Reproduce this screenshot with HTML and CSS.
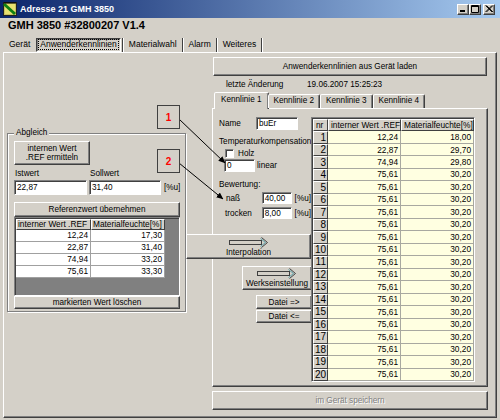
FILE: index.html
```html
<!DOCTYPE html>
<html lang="de">
<head>
<meta charset="utf-8">
<title>Adresse 21 GMH 3850</title>
<link rel="stylesheet" href="styles.css">
</head>
<body>
<div class="window">
  <div class="titlebar">
    <svg class="appicon" viewBox="0 0 14 14" width="14" height="14">
      <rect x="0.5" y="0.5" width="13" height="13" fill="#c8c060" stroke="#202020"/>
      <rect x="2" y="2" width="10" height="10" fill="#e8e070"/>
      <path d="M1 2 L12 12" stroke="#108010" stroke-width="3"/>
      <path d="M1 1 H13" stroke="#000" stroke-width="1"/>
    </svg>
    <span class="title">Adresse 21 GMH 3850</span>
    <div class="caption-buttons">
      <span class="capbtn"><svg width="8" height="8" viewBox="0 0 8 8"><rect x="1" y="5" width="5" height="2" fill="#000"/></svg></span>
      <span class="capbtn"><svg width="8" height="8" viewBox="0 0 8 8"><path d="M0.5 0.5 H7.5 V7.5 H0.5 Z M0.5 1.5 H7.5" fill="none" stroke="#000"/></svg></span>
      <span class="capbtn close"><svg width="8" height="8" viewBox="0 0 8 8"><path d="M0.5 0.5 L7 7 M1.5 0.5 L8 7 M7 0.5 L0.5 7 M8 0.5 L1.5 7" stroke="#000" stroke-width="0.9"/></svg></span>
    </div>
  </div>

  <div class="devtitle">GMH 3850 #32800207 V1.4</div>

  <div class="maintabs">
    <span class="mtab first">Gerät</span>
    <span class="mtab active"><span class="focus">Anwenderkennlinien</span></span>
    <span class="sep"></span>
    <span class="mtab">Materialwahl</span>
    <span class="sep"></span>
    <span class="mtab">Alarm</span>
    <span class="sep"></span>
    <span class="mtab">Weiteres</span>
    <span class="sep"></span>
  </div>

  <div class="page">
    <div class="leftcol">
      <div class="group">
        <span class="legend">Abgleich</span>
        <div class="btn btn-ermitteln">internen Wert<br>.REF ermitteln</div>
        <div class="labels-row">
          <span class="lbl-ist">Istwert</span>
          <span>Sollwert</span>
        </div>
        <div class="inputs-row">
          <span class="edit edit-ist">22,87</span>
          <span class="edit edit-soll">31,40</span>
          <span class="unit">[%u]</span>
        </div>
        <div class="btn btn-wide btn-ref">Referenzwert übernehmen</div>
        <div class="lgrid-frame">
          <div class="lgrid">
            <div class="hc">interner Wert .REF</div><div class="hc">Materialfeuchte[%]</div>
            <div class="wc">12,24</div><div class="wc">17,30</div>
            <div class="wc">22,87</div><div class="wc">31,40</div>
            <div class="wc">74,94</div><div class="wc">33,20</div>
            <div class="wc">75,61</div><div class="wc">33,30</div>
          </div>
        </div>
        <div class="btn btn-wide btn-del">markierten Wert löschen</div>
      </div>
    </div>

    <div class="rightcol">
      <div class="btn btn-load">Anwenderkennlinien aus Gerät laden</div>
      <div class="info-row">
        <span class="info-label">letzte Änderung</span>
        <span>19.06.2007 15:25:23</span>
      </div>
      <div class="ktabs">
        <span class="ktab active">Kennlinie 1</span>
        <span class="ktab">Kennlinie 2</span>
        <span class="ktab">Kennlinie 3</span>
        <span class="ktab">Kennlinie 4</span>
      </div>
      <div class="kpage">
        <div class="form">
          <div class="row row-name">
            <span class="lbl-name">Name</span>
            <span class="edit edit-name">buEr</span>
          </div>
          <div class="text-temp">Temperaturkompensation</div>
          <div class="row row-check">
            <span class="check"></span>
            <span class="holz">Holz</span>
          </div>
          <div class="row row-lin">
            <span class="edit edit-lin">0</span>
            <span class="linear">linear</span>
          </div>
          <div class="text-bew">Bewertung:</div>
          <div class="row row-nass">
            <span class="lbl-nass">naß</span>
            <span class="edit edit-val">40,00</span>
            <span class="unit">[%u]</span>
          </div>
          <div class="row row-trocken">
            <span class="lbl-trocken">trocken</span>
            <span class="edit edit-val">8,00</span>
            <span class="unit">[%u]</span>
          </div>
          <div class="btn btn-interp">
            <svg class="arrow" width="40" height="11" viewBox="0 0 40 11">
              <rect x="0.5" y="3.5" width="32" height="4" fill="#d4d0c8" stroke="#404040"/>
              <path d="M32.5 0.5 L38.5 5.5 L32.5 10.5" fill="none" stroke="#404040"/>
              <path d="M31.5 1.5 L36.5 5.5 L31.5 9.5" fill="none" stroke="#5aa0a8"/>
            </svg>
            <span>Interpolation</span>
          </div>
          <div class="btn btn-werk">
            <svg class="arrow" width="40" height="11" viewBox="0 0 40 11">
              <rect x="0.5" y="3.5" width="32" height="4" fill="#d4d0c8" stroke="#404040"/>
              <path d="M32.5 0.5 L38.5 5.5 L32.5 10.5" fill="none" stroke="#404040"/>
              <path d="M31.5 1.5 L36.5 5.5 L31.5 9.5" fill="none" stroke="#5aa0a8"/>
            </svg>
            <span>Werkseinstellung</span>
          </div>
          <div class="btn btn-datei">Datei =&gt;</div>
          <div class="btn btn-datei btn-datei2">Datei &lt;=</div>
        </div>

        <div class="rgrid-frame">
          <div class="rgrid">
            <div class="rh">nr</div><div class="rh">interner Wert .REF</div><div class="rh">Materialfeuchte[%]</div>
            <div class="rn">1</div><div class="yc">12,24</div><div class="yc">18,00</div>
            <div class="rn">2</div><div class="yc">22,87</div><div class="yc">29,70</div>
            <div class="rn">3</div><div class="yc">74,94</div><div class="yc">29,80</div>
            <div class="rn">4</div><div class="yc">75,61</div><div class="yc">30,20</div>
            <div class="rn">5</div><div class="yc">75,61</div><div class="yc">30,20</div>
            <div class="rn">6</div><div class="yc">75,61</div><div class="yc">30,20</div>
            <div class="rn">7</div><div class="yc">75,61</div><div class="yc">30,20</div>
            <div class="rn">8</div><div class="yc">75,61</div><div class="yc">30,20</div>
            <div class="rn">9</div><div class="yc">75,61</div><div class="yc">30,20</div>
            <div class="rn">10</div><div class="yc">75,61</div><div class="yc">30,20</div>
            <div class="rn">11</div><div class="yc">75,61</div><div class="yc">30,20</div>
            <div class="rn">12</div><div class="yc">75,61</div><div class="yc">30,20</div>
            <div class="rn">13</div><div class="yc">75,61</div><div class="yc">30,20</div>
            <div class="rn">14</div><div class="yc">75,61</div><div class="yc">30,20</div>
            <div class="rn">15</div><div class="yc">75,61</div><div class="yc">30,20</div>
            <div class="rn">16</div><div class="yc">75,61</div><div class="yc">30,20</div>
            <div class="rn">17</div><div class="yc">75,61</div><div class="yc">30,20</div>
            <div class="rn">18</div><div class="yc">75,61</div><div class="yc">30,20</div>
            <div class="rn">19</div><div class="yc">75,61</div><div class="yc">30,20</div>
            <div class="rn">20</div><div class="yc">75,61</div><div class="yc">30,20</div>
          </div>
        </div>
      </div>
      <div class="btn btn-save disabled">im Gerät speichern</div>
    </div>
  </div>

  <svg class="annot" width="500" height="420" viewBox="0 0 500 420">
    <defs>
      <marker id="ah" markerWidth="7" markerHeight="6" refX="6.5" refY="3" orient="auto" markerUnits="userSpaceOnUse">
        <path d="M0 0 L7 3 L0 6 Z" fill="#000"/>
      </marker>
    </defs>
    <path d="M179 119 L225 163" stroke="#000" stroke-width="1" marker-end="url(#ah)"/>
    <path d="M179 163 L223 199" stroke="#000" stroke-width="1" marker-end="url(#ah)"/>
  </svg>
  <div class="marker m1">1</div>
  <div class="marker m2">2</div>
</div>
</body>
</html>
```

FILE: styles.css
```css
* { box-sizing: border-box; }
html, body { margin: 0; padding: 0; }
body {
  width: 500px; height: 420px; overflow: hidden;
  background: #d4d0c8;
  font-family: "Liberation Sans", Arial, sans-serif;
  font-size: 8.2px; color: #000;
}
.window { position: relative; width: 500px; height: 420px; background: #d4d0c8; }

/* title bar */
.titlebar {
  height: 18px; display: flex; align-items: center;
  padding: 0 5px 0 3px;
  background: linear-gradient(to right, #0a246a, #a6caf0);
}
.appicon { flex: none; display: block; }
.title { margin-left: 3px; flex: 1; color: #fff; font-weight: bold; font-size: 9px; }
.caption-buttons { display: flex; }
.capbtn {
  width: 12px; height: 11px; display: flex; align-items: center; justify-content: center;
  background: #d4d0c8;
  border: 1px solid; border-color: #fff #404040 #404040 #fff;
  box-shadow: inset -1px -1px #808080;
}
.capbtn svg { display: block; }
.capbtn.close { margin-left: 2px; }

.devtitle { height: 15px; line-height: 15px; padding-left: 8px; font-size: 11px; font-weight: bold; }

/* main tabs */
.maintabs { margin-top: 4px; height: 15px; display: flex; align-items: center; padding-left: 6px; font-size: 8.5px; }
.mtab { height: 13px; line-height: 13px; padding: 0 4px; white-space: nowrap; }
.mtab.first { padding: 0 3px; margin-right: 3px; }
.mtab.active {
  padding: 0 2px;
  border: 1px solid; border-color: #404040 #fff #fff #404040;
  box-shadow: inset 1px 1px #808080;
  display: flex; align-items: center; height: 14px;
}
.mtab .focus { outline: 1px dotted #000; outline-offset: 0; line-height: 9px; padding: 0 1px; }
.sep { width: 2px; height: 14px; margin: 0 1px; border-left: 1px solid #404040; border-right: 1px solid #fff; }

/* page */
.page {
  margin: 0 3px; height: 366px; display: flex;
  border: 1px solid; border-color: #fff #404040 #404040 #fff;
  box-shadow: inset -1px -1px #808080;
}

/* generic controls */
.btn {
  display: flex; align-items: center; justify-content: center; text-align: center;
  background: #d4d0c8;
  border: 1px solid; border-color: #fff #404040 #404040 #fff;
  box-shadow: inset -1px -1px #808080;
  white-space: nowrap;
}
.btn.disabled { color: #808080; text-shadow: 1px 1px 0 #fff; }
.edit {
  display: flex; align-items: center;
  background: #fff; padding: 0 2px;
  border: 1px solid; border-color: #808080 #fff #fff #808080;
  box-shadow: inset 1px 1px #404040;
  white-space: nowrap;
}

/* left column */
.leftcol { margin-left: 3px; margin-top: 80px; width: 179px; }
.group {
  border: 1px solid #808080;
  box-shadow: inset 1px 1px #fff, 1px 1px #fff;
  padding-bottom: 2px;
}
.legend { display: block; width: max-content; margin: -6px 0 0 6px; padding: 0 2px; line-height: 10px; background: #d4d0c8; }
.btn-ermitteln { margin: 3px 0 0 6px; width: 76px; height: 24px; line-height: 9px; }
.labels-row { display: flex; margin: 4px 0 0 7px; height: 10px; line-height: 10px; }
.lbl-ist { width: 75px; }
.inputs-row { display: flex; align-items: center; margin: 1px 0 0 6px; height: 15px; }
.edit-ist { width: 73px; height: 15px; }
.edit-soll { width: 72px; height: 15px; margin-left: 2px; }
.unit { margin-left: 3px; color: #000; }
.btn-wide { margin-left: 6px; width: 166px; }
.btn-ref { margin-top: 7px; height: 15px; }
.lgrid-frame {
  margin-left: 6px; width: 166px; height: 79px;
  background: #808080;
  border: 1px solid; border-color: #808080 #fff #fff #808080;
  box-shadow: inset 1px 1px #404040;
  padding: 1px 0 0 1px;
}
.lgrid { display: grid; grid-template-columns: 75px 74px; grid-template-rows: 11px repeat(4, 12px); font-size: 8.3px; }
.hc {
  background: #d4d0c8; padding-left: 1px; line-height: 9px;
  border: 1px solid; border-color: #fff #404040 #404040 #fff;
  white-space: nowrap; overflow: hidden;
}
.wc {
  background: #fff; text-align: right; padding-right: 2px; line-height: 11px;
  border-right: 1px solid #a0a0a0; border-bottom: 1px solid #a0a0a0;
}
.btn-del { height: 13px; }

/* right column */
.rightcol { margin-left: 26px; margin-top: 0; width: 276px; }
.btn-load { margin: 4px 0 0 1px; width: 274px; height: 19px; }
.info-row { display: flex; margin-top: 3px; height: 11px; line-height: 11px; padding-left: 14px; }
.info-label { width: 81px; }
.ktabs { margin-top: 2px; height: 16px; display: flex; align-items: flex-end; padding-left: 4px; position: relative; z-index: 1; }
.ktab {
  height: 14px; line-height: 12px; padding: 0 5px; white-space: nowrap;
  border: 1px solid; border-bottom: none;
  border-color: #fff #404040 transparent #fff;
  box-shadow: inset -1px 0 #808080;
  border-radius: 2px 2px 0 0;
  background: #d4d0c8;
}
.ktab.active { height: 17px; margin: 0 -1px 0 -2px; padding: 0 6px; line-height: 14px; margin-bottom: -1px; }
.kpage {
  height: 279px; display: flex;
  border: 1px solid; border-color: #fff #404040 #404040 #fff;
  box-shadow: inset -1px -1px #808080;
}
.form { width: 98px; flex: none; }
.row { display: flex; align-items: center; }
.row-name { margin-top: 8px; height: 13px; }
.lbl-name { padding-left: 6px; width: 43px; }
.edit-name { width: 42px; height: 13px; }
.text-temp { margin-top: 7px; height: 10px; line-height: 10px; padding-left: 6px; white-space: nowrap; }
.row-check { margin-top: 2px; height: 9px; }
.check {
  margin-left: 12px; width: 9px; height: 9px; background: #fff;
  border: 1px solid; border-color: #808080 #fff #fff #808080;
  box-shadow: inset 1px 1px #404040;
}
.holz { margin-left: 4px; }
.row-lin { margin-top: 1px; height: 13px; }
.edit-lin { margin-left: 11px; width: 31px; height: 13px; }
.linear { margin-left: 2px; }
.text-bew { margin-top: 8px; height: 10px; line-height: 10px; padding-left: 6px; }
.row-nass { margin-top: 2px; height: 12px; }
.row-trocken { margin-top: 3px; height: 12px; }
.lbl-nass { padding-left: 13px; width: 49px; }
.lbl-trocken { padding-left: 12px; width: 49px; }
.edit-val { width: 30px; height: 12px; }
.btn-interp {
  position: relative; z-index: 2;
  margin: 15px 0 0 -27px; width: 125px; height: 25px;
  flex-direction: column; gap: 0; line-height: 9px;
}
.btn-werk { margin: 7px 0 0 29px; width: 70px; height: 24px; flex-direction: column; line-height: 9px; }
.arrow { display: block; }
.btn-datei { margin: 5px 0 0 43px; width: 56px; height: 14px; }
.btn-datei2 { margin-top: 1px; height: 13px; }

.rgrid-frame {
  margin-top: 8px; width: 164px; height: 265px;
  border: 1px solid; border-color: #808080 #fff #fff #808080;
  box-shadow: inset 1px 1px #404040;
  padding: 1px 0 0 1px; background: #d4d0c8;
}
.rgrid {
  display: grid; height: 262px;
  grid-template-columns: 15px 73px 73px;
  grid-template-rows: repeat(21, minmax(0, 1fr));
  line-height: 1; font-size: 8.3px;
}
.rh {
  background: #d4d0c8; padding-left: 2px; white-space: nowrap; overflow: hidden;
  display: flex; align-items: center;
  border: 1px solid; border-color: #fff #404040 #404040 #fff;
}
.rn {
  background: #d4d0c8; font-size: 10px; line-height: 1;
  display: flex; align-items: center; justify-content: flex-end; padding-right: 1px;
  border: 1px solid; border-color: #fff #404040 #404040 #fff;
}
.yc {
  background: #ffffe1; display: flex; align-items: center; justify-content: flex-end; padding-right: 2px;
  border-right: 1px solid #a8a8a0; border-bottom: 1px solid #a8a8a0;
}
.btn-save { margin-top: 4px; width: 276px; height: 19px; }

/* annotations */
.annot { position: absolute; left: 0; top: 0; pointer-events: none; }
.marker {
  position: absolute; left: 157px; width: 23px; height: 24px;
  display: flex; align-items: center; justify-content: center;
  background: #d4d0c8; border: 1px solid #404040;
  color: #f00; font-weight: bold; font-size: 10px;
}
.m1 { top: 105px; }
.m2 { top: 149px; }
```
